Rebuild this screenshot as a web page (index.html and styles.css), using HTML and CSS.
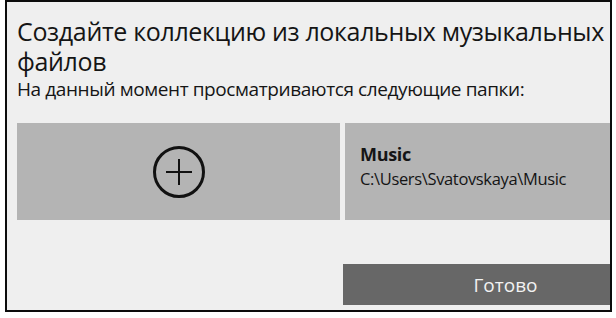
FILE: index.html
```html
<!DOCTYPE html>
<html lang="ru">
<head>
<meta charset="utf-8">
<link rel="stylesheet" href="styles.css">
</head>
<body>
<div class="frame">
  <h1 class="title">Создайте коллекцию из локальных музыкальных файлов</h1>
  <p class="subtitle">На данный момент просматриваются следующие папки:</p>
  <div class="cards">
    <div class="card add">
      <svg class="plus" width="54" height="54" viewBox="0 0 54 54">
        <circle cx="27" cy="27" r="24.5" fill="none" stroke="#111" stroke-width="3"/>
        <path d="M27 14V40M14 27H40" stroke="#111" stroke-width="2"/>
      </svg>
    </div>
    <div class="card folder">
      <div class="folder-name">Music</div>
      <div class="folder-path">C:\Users\Svatovskaya\Music</div>
    </div>
  </div>
  <div class="actions">
    <button class="done">Готово</button>
  </div>
</div>
</body>
</html>
```
FILE: styles.css
```css
html, body {
  margin: 0;
  padding: 0;
  background: #ffffff;
}
body {
  width: 616px;
  height: 318px;
  overflow: hidden;
}
.frame {
  box-sizing: border-box;
  margin-left: 5px;
  width: 607px;
  height: 312px;
  border: 2px solid #0c0c0c;
  background: #efefef;
  padding: 14px 0 0 10px;
  overflow: hidden;
  font-family: "Open Sans", "Noto Sans", sans-serif;
  color: #151515;
}
.title {
  margin: 0;
  width: 600px;
  font-weight: 400;
  font-size: 25px;
  line-height: 30px;
  letter-spacing: -0.35px;
}
.subtitle {
  margin: 2px 0 0;
  font-size: 19px;
  line-height: 23px;
  letter-spacing: -0.4px;
}
.cards {
  display: flex;
  gap: 5px;
  margin-top: 22px;
}
.card {
  flex: 0 0 323px;
  height: 97px;
  background: #b4b4b4;
  box-sizing: border-box;
}
.add {
  display: flex;
  align-items: center;
  justify-content: center;
}
.folder {
  padding: 20px 0 0 15px;
}
.folder-name {
  font-weight: 700;
  font-size: 18px;
  line-height: 22px;
  letter-spacing: -0.3px;
}
.folder-path {
  margin-top: 4px;
  font-size: 16.5px;
  line-height: 20px;
  letter-spacing: -0.35px;
}
.actions {
  display: flex;
  margin-top: 44px;
  padding-left: 326px;
}
.done {
  flex: 0 0 325px;
  height: 41px;
  border: 0;
  background: #676767;
  color: #f2f2f2;
  font-family: "Open Sans", "Noto Sans", sans-serif;
  font-size: 19px;
  padding: 0;
  text-align: center;
}
```
